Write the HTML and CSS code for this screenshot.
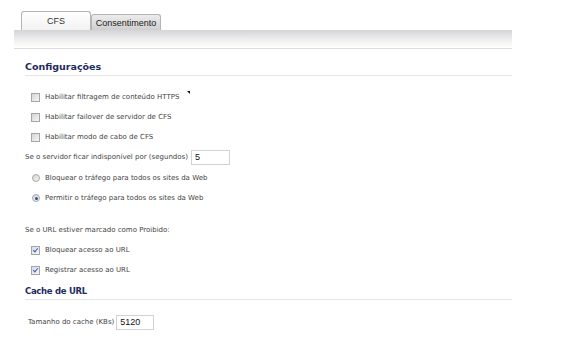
FILE: index.html
```html
<!DOCTYPE html>
<html lang="pt">
<head>
    <meta charset="UTF-8">
    <meta name="viewport" content="width=device-width, initial-scale=1.0">
    <title>CFS</title>
    <link rel="stylesheet" href="styles.css">
</head>
<body>

    <!-- Tabs -->
    <div class="tabs">
        <div class="tab active">CFS</div>
        <div class="tab">Consentimento</div>
    </div>
    <div class="tab-bar"></div>

    <div class="content">
        <!-- Configuracoes -->
        <div class="section-title">Configurações</div>
        <div class="section-body">
            <div class="row opt">
                <span class="check"></span>
                <span>Habilitar filtragem de conteúdo HTTPS</span>
                <span class="mark"></span>
            </div>
            <div class="row opt">
                <span class="check"></span>
                <span>Habilitar failover de servidor de CFS</span>
            </div>
            <div class="row opt">
                <span class="check"></span>
                <span>Habilitar modo de cabo de CFS</span>
            </div>
            <div class="row">
                <span>Se o servidor ficar indisponível por (segundos)</span>
                <span class="field small-field">5</span>
            </div>
            <div class="row opt first-radio">
                <span class="radio"></span>
                <span>Bloquear o tráfego para todos os sites da Web</span>
            </div>
            <div class="row opt">
                <span class="radio on"></span>
                <span>Permitir o tráfego para todos os sites da Web</span>
            </div>

            <div class="row gap-top">
                <span>Se o URL estiver marcado como Proibido:</span>
            </div>
            <div class="row opt">
                <span class="check on"></span>
                <span>Bloquear acesso ao URL</span>
            </div>
            <div class="row opt">
                <span class="check on"></span>
                <span>Registrar acesso ao URL</span>
            </div>
        </div>

        <!-- Cache -->
        <div class="section-title narrow">Cache de URL</div>
        <div class="section-body cache">
            <div class="row">
                <span>Tamanho do cache (KBs)</span>
                <span class="field cache-field">5120</span>
            </div>
        </div>
    </div>

</body>
</html>
```

FILE: styles.css
```css
/* Page */
body{
    margin: 0;
    background-color: white;
    font-family: "DejaVu Sans", Verdana, sans-serif;
    font-size: 7px;
    color: #444;
}

/* Tab Styles */
.tabs{
    display: flex;
    align-items: flex-end;
    height: 30px;
    padding-left: 21px;
}
.tab{
    width: 68px;
    height: 15px;
    border: 1px solid #b4b4b4;
    border-bottom: none;
    border-radius: 3px 3px 0 0;
    background: linear-gradient(#ececec, #cfcfcf);
    display: flex;
    align-items: center;
    justify-content: center;
    font-family: "Liberation Sans", Arial, sans-serif;
    font-size: 9px;
    color: #1a1a1a;
}
.tab.active{
    width: 68px;
    height: 18px;
    background: linear-gradient(#ffffff, #f2f2f2);
    color: #333;
}
.tab-bar{
    margin-left: 14px;
    width: 498px;
    height: 18px;
    background: linear-gradient(#d4d4d8, #efefef 55%, #ffffff);
    border-bottom: 1px solid #dcdcdc;
}

/* Content */
.content{
    width: 487px;
    padding-left: 25px;
}
.section-title{
    margin-top: 13px;
    height: 13px;
    border-bottom: 1px solid #e6e6e6;
    font-size: 9.5px;
    font-weight: bold;
    color: #1d2b5e;
    line-height: 10px;
}
.section-title.narrow{
    font-size: 8.5px;
    letter-spacing: -0.3px;
}
.section-body{
    padding-top: 11px;
    padding-bottom: 6px;
}
.section-body + .section-title{
    margin-top: 0;
}
.cache{
    padding-top: 12px;
    padding-left: 3px;
}
.row{
    height: 20px;
    display: flex;
    align-items: center;
}
.opt{
    padding-left: 6px;
}
.first-radio{
    margin-top: 1px;
}
.gap-top{
    margin-top: 12px;
}

/* Form controls */
.check{
    width: 7px;
    height: 7px;
    margin-right: 5px;
    border: 1px solid #a5a5a5;
    background: linear-gradient(135deg, #d6d6d6, #f4f4f4);
    display: flex;
    align-items: center;
    justify-content: center;
}
.check.on{
    background: linear-gradient(135deg, #d8dce6, #f4f5f8);
}
.check.on::after{
    content: "";
    width: 2px;
    height: 4px;
    margin-top: -1px;
    border-right: 1.5px solid #4660ad;
    border-bottom: 1.5px solid #4660ad;
    transform: rotate(40deg);
}
.radio{
    width: 6px;
    height: 6px;
    margin-left: 1px;
    margin-right: 5px;
    border: 1px solid #a8a8a8;
    border-radius: 50%;
    background: linear-gradient(135deg, #d4d4d4, #f6f6f6);
    display: flex;
    align-items: center;
    justify-content: center;
}
.radio.on::after{
    content: "";
    width: 3px;
    height: 3px;
    border-radius: 50%;
    background-color: #2f4f9a;
}
.field{
    height: 13px;
    margin-left: 3px;
    padding-left: 3px;
    border: 1px solid #d2d2d2;
    display: flex;
    align-items: center;
    font-family: "Liberation Sans", Arial, sans-serif;
    font-size: 9px;
    color: #111;
}
.small-field{
    width: 34px;
}
.cache-field{
    width: 33px;
    margin-left: 2px;
}
.mark{
    align-self: flex-start;
    margin-top: 4px;
    margin-left: 8px;
    width: 0;
    height: 0;
    border-left: 3px solid transparent;
    border-top: 3px solid #111;
}
```
